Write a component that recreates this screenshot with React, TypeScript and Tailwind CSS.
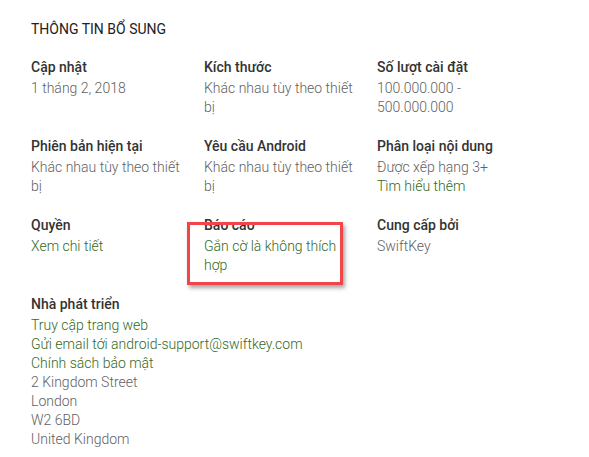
const link = "text-[#33691e]";

type Item = { label: string; lines: { text: string; link?: boolean }[] };

const items: Item[] = [
  { label: "Cập nhật", lines: [{ text: "1 tháng 2, 2018" }] },
  { label: "Kích thước", lines: [{ text: "Khác nhau tùy theo thiết bị" }] },
  { label: "Số lượt cài đặt", lines: [{ text: "100.000.000 - 500.000.000" }] },
  { label: "Phiên bản hiện tại", lines: [{ text: "Khác nhau tùy theo thiết bị" }] },
  { label: "Yêu cầu Android", lines: [{ text: "Khác nhau tùy theo thiết bị" }] },
  {
    label: "Phân loại nội dung",
    lines: [{ text: "Được xếp hạng 3+" }, { text: "Tìm hiểu thêm", link: true }],
  },
  { label: "Quyền", lines: [{ text: "Xem chi tiết", link: true }] },
  { label: "Báo cáo", lines: [{ text: "Gắn cờ là không thích hợp", link: true }] },
  { label: "Cung cấp bởi", lines: [{ text: "SwiftKey" }] },
];

const developer = [
  { text: "Truy cập trang web", link: true },
  { text: "Gửi email tới android-support@swiftkey.com", link: true },
  { text: "Chính sách bảo mật", link: true },
  { text: "2 Kingdom Street" },
  { text: "London" },
  { text: "W2 6BD" },
  { text: "United Kingdom" },
];

const Value = ({ text, isLink }: { text: string; isLink?: boolean }) => (
  <div
    className={`text-[14px] leading-[19px] font-light ${isLink ? link : "text-[#616161]"}`}
  >
    {text}
  </div>
);

const Cell = ({ item }: { item: Item }) => (
  <div className="pr-5 pb-[18px]">
    <div className="text-[14px] leading-[23px] font-medium text-[#333333]">
      {item.label}
    </div>
    {item.lines.map((l, i) => (
      <Value key={i} text={l.text} isLink={l.link} />
    ))}
  </div>
);

export default function App() {
  return (
    <div
      className="relative w-[589px] h-[457px] bg-white overflow-hidden"
      style={{ fontFamily: "Roboto, 'Liberation Sans', sans-serif" }}
    >
      <div className="pl-[31px] pt-[19px]">
        {/* Section title */}
        <h2 className="text-[14px] leading-[20px] uppercase text-[#212121] mb-[17px]">
          Thông tin bổ sung
        </h2>

        {/* Info grid */}
        <div className="grid grid-cols-[173px_173px_173px]">
          {items.map((item) => (
            <Cell key={item.label} item={item} />
          ))}
        </div>

        {/* Developer */}
        <div>
          <div className="text-[14px] leading-[23px] font-medium text-[#333333]">
            Nhà phát triển
          </div>
          {developer.map((l, i) => (
            <Value key={i} text={l.text} isLink={l.link} />
          ))}
        </div>
      </div>

      {/* Annotation highlight */}
      <div className="absolute left-[187px] top-[222px] w-[156px] h-[63px] border-[3px] border-[#f2454a] shadow-[2px_3px_4px_rgba(0,0,0,0.35)]" />
    </div>
  );
}
